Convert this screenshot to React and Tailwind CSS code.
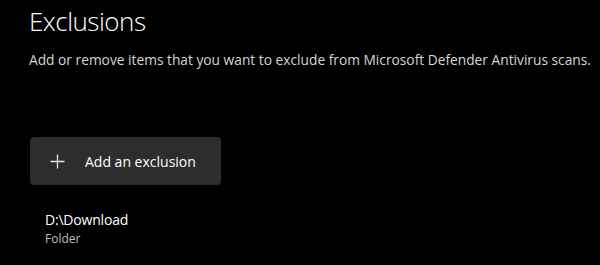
import React from 'react'

export default function App() {
  return (
    <div className="w-[600px] h-[265px] bg-black text-white overflow-hidden font-['Open_Sans','Noto_Sans',sans-serif]">
      <div className="pl-[29px] pt-[1px]">
        <h1 className="text-[26px] leading-[40px] font-light tracking-[-0.5px]">Exclusions</h1>
        <p className="mt-[9px] text-[13.75px] leading-[20px] text-[#d6d6d6]">
          Add or remove items that you want to exclude from Microsoft Defender Antivirus scans.
        </p>
        <button className="mt-[67px] ml-[1px] w-[191px] h-[48px] rounded-[4px] bg-[#2d2d2d] flex items-center pl-[20px] gap-[20px]">
          <svg width="15" height="15" viewBox="0 0 15 15" fill="none" stroke="#e6e6e6" strokeWidth="1.3">
            <path d="M7.5 0.5v14M0.5 7.5h14" />
          </svg>
          <span className="text-[14px] text-white">Add an exclusion</span>
        </button>
        <div className="mt-[25px] pl-[16px]">
          <div className="text-[14px] leading-[20px] text-white tracking-[-0.2px]">D:\Download</div>
          <div className="text-[12px] leading-[18px] text-[#bdbdbd]">Folder</div>
        </div>
      </div>
    </div>
  )
}
